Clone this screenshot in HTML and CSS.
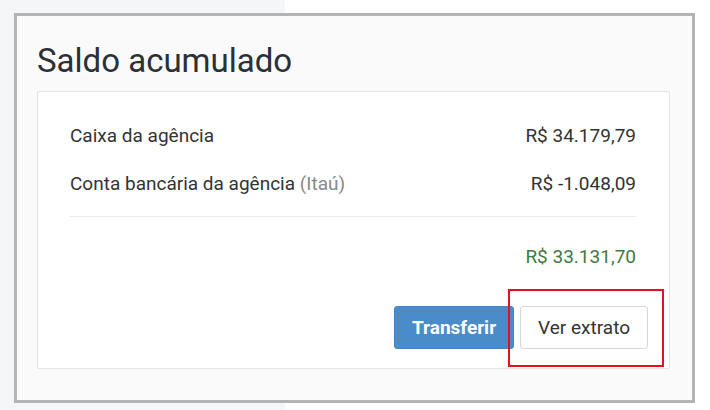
FILE: index.html
```html
<!DOCTYPE html>
<html lang="pt-BR">
<head>
    <meta charset="UTF-8">
    <title>Saldo acumulado</title>
    <link rel="stylesheet" href="styles.css">
</head>
<body>

    <div class="frame">
        <h1>Saldo acumulado</h1>

        <div class="card">
            <div class="row">
                <span>Caixa da agência</span>
                <span>R$ 34.179,79</span>
            </div>
            <div class="row">
                <span>Conta bancária da agência <span class="muted">(Itaú)</span></span>
                <span>R$ -1.048,09</span>
            </div>

            <hr class="divider">

            <div class="row total">
                <span>R$ 33.131,70</span>
            </div>

            <div class="actions">
                <button class="btn btn-primary">Transferir</button>
                <span class="highlight">
                    <button class="btn btn-default">Ver extrato</button>
                </span>
            </div>
        </div>
    </div>

</body>
</html>
```

FILE: styles.css
```css
* {
    box-sizing: border-box;
    margin: 0;
    padding: 0;
}

body {
    font-family: Roboto, "Liberation Sans", Arial, sans-serif;
    color: #333;
    background: linear-gradient(to right, #f5f6f8 0, #f5f6f8 285px, #fff 285px);
    width: 710px;
    height: 410px;
    overflow: hidden;
    padding: 13px 0 0 14px;
}

.frame {
    width: 681px;
    height: 390px;
    border: 3px solid #b4b4b4;
    background-color: #fafafa;
    padding: 26px 22px 0 20px;
}

h1 {
    font-size: 33px;
    font-weight: 400;
    line-height: 38px;
    color: #2b3036;
    margin-bottom: 11px;
}

.card {
    background-color: #fff;
    border: 1px solid #e3e3e3;
    border-radius: 2px;
    padding: 19px 33px 19px 32px;
}

.row {
    display: flex;
    justify-content: space-between;
    align-items: center;
    height: 48px;
    font-size: 19px;
}

.muted {
    color: #888;
}

.divider {
    border: none;
    border-top: 1px solid #eaeaea;
    margin: 9px 0 15px;
}

.total {
    justify-content: flex-end;
    color: #3f7a3f;
}

.actions {
    display: flex;
    justify-content: flex-end;
    gap: 6px;
    margin-top: 26px;
    margin-right: -12px;
}

.btn {
    height: 43px;
    padding: 0 17px;
    font-family: inherit;
    font-size: 19px;
    border-radius: 3px;
    cursor: pointer;
}

.btn-primary {
    background-color: #4a8bca;
    border: 1px solid #4584c2;
    color: #fff;
    font-weight: 700;
}

.btn-default {
    background-color: #fff;
    border: 1px solid #d6d6d6;
    color: #333;
}

.highlight {
    position: relative;
    display: flex;
}

.highlight::after {
    content: "";
    position: absolute;
    top: -17px;
    left: -12px;
    right: -16px;
    bottom: -18px;
    border: 2px solid #e0121f;
    pointer-events: none;
}
```
